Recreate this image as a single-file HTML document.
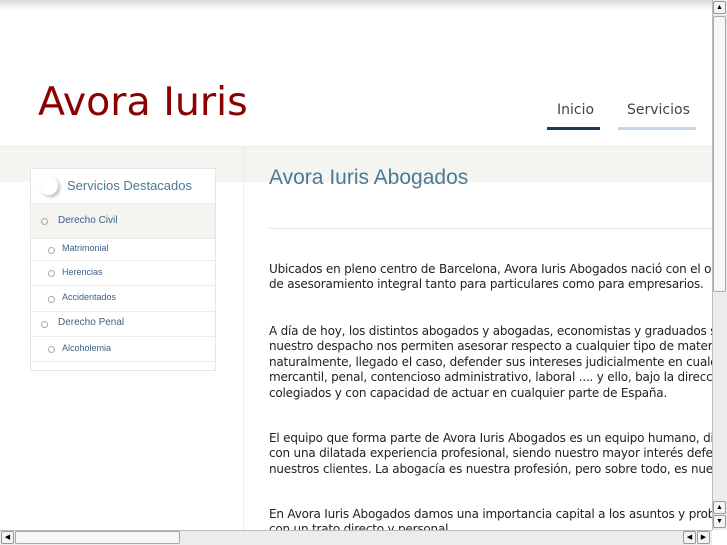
<!DOCTYPE html>
<html><head><meta charset="utf-8"><style>
*{margin:0;padding:0;box-sizing:border-box}
body{width:727px;height:545px;overflow:hidden;position:relative;background:#fff;font-family:"Liberation Sans",sans-serif}
.abs{position:absolute}
.topshade{left:0;top:0;width:712px;height:10px;background:linear-gradient(#d8d8d8,#fff)}
.logo{left:38px;top:79px;font-family:"DejaVu Sans",sans-serif;font-size:39.5px;color:#8b0000;white-space:nowrap}
.nav{top:102px;color:#444;font-family:"DejaVu Sans",sans-serif;font-size:14px}
.bar{left:0;top:146px;width:712px;height:36px;background:#f4f4f1;border-top:1px solid #e9e9e6}
.vline{left:243px;top:146px;width:1px;height:384px;background:#ebebeb}
.side{left:30px;top:168px;width:186px;height:203px;border:1px solid #e6e6e6;background:#fff}
.side .h{height:34px;position:relative;font-size:13px;color:#4a7a94;padding:9px 0 0 36px}
.side .h:before{content:"";position:absolute;left:9px;top:8px;width:18px;height:18px;border-radius:50%;background:#fff;box-shadow:2px 2px 3px #bbb}
.it{border-top:1px solid #ececec;font-size:10px;color:#3b5f86;position:relative}
.it:before{content:"";position:absolute;width:5px;height:5px;border:1px solid #aaa;border-radius:50%;top:calc(50% - 3px)}
.l1{padding-left:27px}.l1:before{left:10px}
.l2{padding-left:31px;font-size:9px}.l2:before{left:17px}
.title{left:269px;top:166px;font-size:21px;color:#4a7a94;white-space:nowrap}
.hr{left:269px;top:228px;width:443px;height:1px;background:#e3e3e3}
.txt{left:269px;width:443px;overflow:hidden;font-family:"DejaVu Sans",sans-serif;font-size:12px;letter-spacing:-0.2px;line-height:15.4px;color:#222;white-space:nowrap}
.vs{left:712px;top:0;width:15px;height:530px;background:#ececec;border-left:1px solid #bbb}
.hs{left:0;top:530px;width:712px;height:15px;background:#ececec;border-top:1px solid #bbb}
.btn{width:13px;height:13px;background:#f4f4f4;border:1px solid #999;border-radius:2px;font-size:7px;line-height:11px;text-align:center;color:#000}
</style></head><body>
<div class="abs topshade"></div>
<div class="abs logo">Avora Iuris</div>
<div class="abs nav" style="left:557px">Inicio</div>
<div class="abs" style="left:547px;top:127px;width:53px;height:3px;background:#1f3a5c"></div>
<div class="abs nav" style="left:627px">Servicios</div>
<div class="abs" style="left:618px;top:127px;width:78px;height:3px;background:#c5d7ea"></div>
<div class="abs bar"></div>
<div class="abs vline"></div>
<div class="abs side">
<div class="h">Servicios Destacados</div>
<div class="it l1" style="background:#f4f4f1;height:35px;line-height:33px">Derecho Civil</div>
<div class="it l2" style="height:22px;line-height:19px">Matrimonial</div>
<div class="it l2" style="height:25px;line-height:22px">Herencias</div>
<div class="it l2" style="height:26px;line-height:23px">Accidentados</div>
<div class="it l1" style="height:25px;line-height:22px">Derecho Penal</div>
<div class="it l2" style="height:25px;line-height:22px">Alcoholemia</div>
<div style="border-top:1px solid #ececec;height:10px"></div>
</div>
<div class="abs title">Avora Iuris Abogados</div>
<div class="abs hr"></div>
<div class="abs txt" style="top:262px">Ubicados en pleno centro de Barcelona, Avora Iuris Abogados nació con el objetivo<br>de asesoramiento integral tanto para particulares como para empresarios.</div>
<div class="abs txt" style="top:324px">A día de hoy, los distintos abogados y abogadas, economistas y graduados sociales de<br>nuestro despacho nos permiten asesorar respecto a cualquier tipo de materia y,<br>naturalmente, llegado el caso, defender sus intereses judicialmente en cualquier ámbito:<br>mercantil, penal, contencioso administrativo, laboral .... y ello, bajo la dirección de letrados<br>colegiados y con capacidad de actuar en cualquier parte de España.</div>
<div class="abs txt" style="top:431px">El equipo que forma parte de Avora Iuris Abogados es un equipo humano, dinámico y<br>con una dilatada experiencia profesional, siendo nuestro mayor interés defender a<br>nuestros clientes. La abogacía es nuestra profesión, pero sobre todo, es nuestra pasión.</div>
<div class="abs txt" style="top:507px">En Avora Iuris Abogados damos una importancia capital a los asuntos y problemas<br>con un trato directo y personal.</div>
<div class="abs vs">
<div class="abs btn" style="left:0;top:1px">▲</div>
<div class="abs" style="left:0;top:16px;width:13px;height:276px;background:#f6f6f6;border:1px solid #aaa;border-radius:2px"></div>
<div class="abs btn" style="left:0;top:501px">▲</div>
<div class="abs btn" style="left:0;top:515px">▼</div>
</div>
<div class="abs hs">
<div class="abs btn" style="left:1px;top:0">◀</div>
<div class="abs" style="left:15px;top:0;width:165px;height:13px;background:#f6f6f6;border:1px solid #aaa;border-radius:2px"></div>
<div class="abs btn" style="left:683px;top:0">◀</div>
<div class="abs btn" style="left:697px;top:0">▶</div>
</div>
</body></html>
